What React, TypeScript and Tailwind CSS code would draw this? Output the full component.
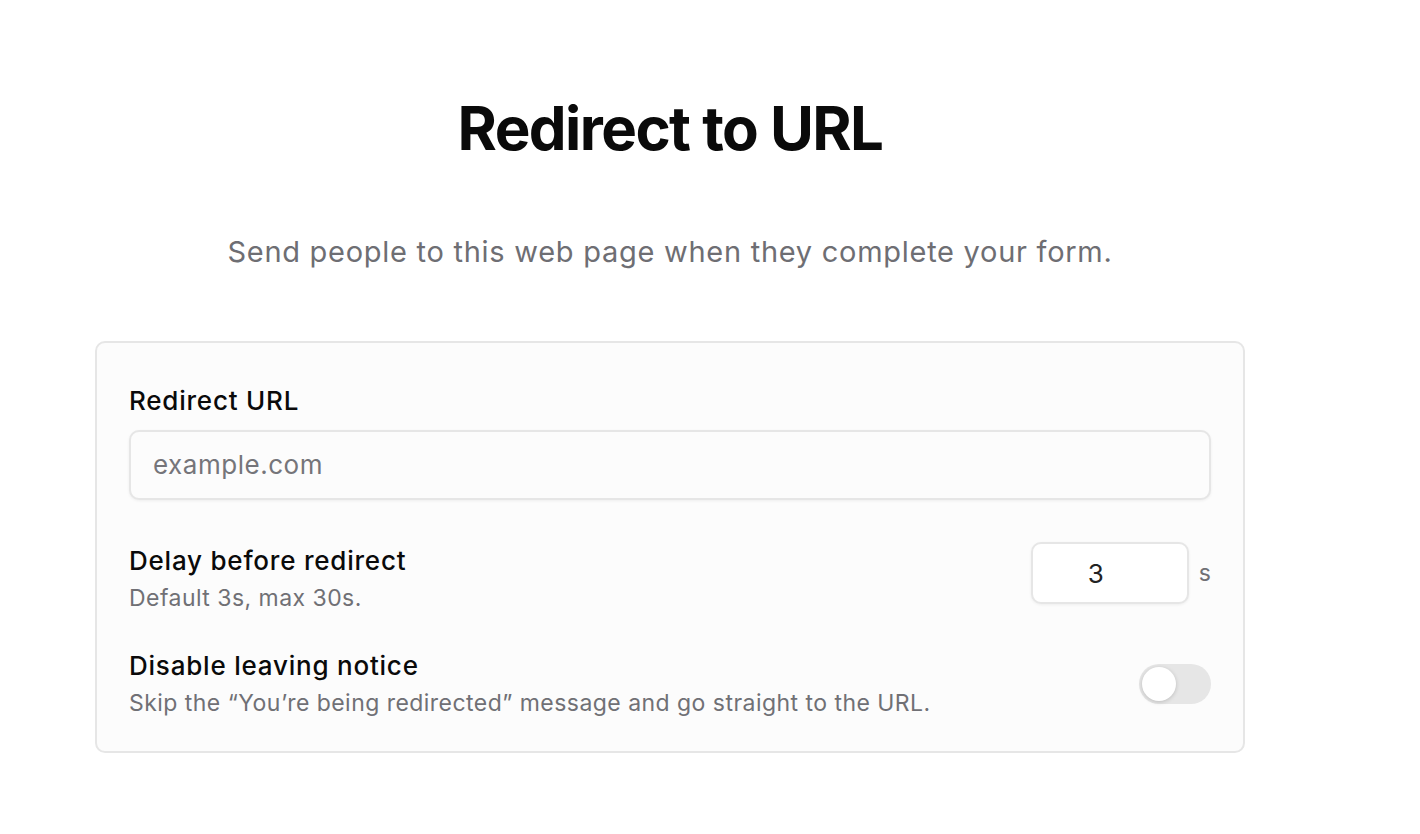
import React from "react";

export default function App() {
  return (
    <div className="min-h-[834px] w-[1420px] bg-white font-['Inter',sans-serif] text-[#0a0a0a]">
      <div className="ml-[95px] w-[1150px] pt-[98px]">
        <h1 className="text-center text-[60px] font-bold leading-none tracking-[-0.026em]">Redirect to URL</h1>
        <p className="mt-[79px] text-center text-[29px] leading-none tracking-[0.025em] text-[#6e6e73]">
          Send people to this web page when they complete your form.
        </p>
        <div className="mt-[75px] rounded-[10px] border-2 border-[#e6e6e6] bg-[#fcfcfc] px-[32px] pb-[36px] pt-[45px]">
          <div className="text-[26px] font-medium leading-none tracking-[0.03em]">Redirect URL</div>
          <div className="mt-[16px] flex h-[70px] items-center rounded-[10px] border-2 border-[#e6e6e6] bg-[#fcfcfc] px-[22px] shadow-[0_1px_3px_rgba(0,0,0,0.06)]">
            <span className="text-[26px] leading-none tracking-[0.02em] text-[#75757a]">example.com</span>
          </div>
          <div className="mt-[48px] flex items-start justify-between">
            <div>
              <div className="text-[26px] font-medium leading-none tracking-[0.03em]">Delay before redirect</div>
              <div className="mt-[13px] text-[23px] leading-none tracking-[0.02em] text-[#707075]">Default 3s, max 30s.</div>
            </div>
            <div className="-mt-[6px] flex items-center gap-[10px]">
              <div className="flex h-[62px] w-[158px] items-center justify-center rounded-[10px] border-2 border-[#e6e6e6] bg-white pr-[28px] text-[26px] text-[#222] shadow-[0_1px_3px_rgba(0,0,0,0.06)]">
                3
              </div>
              <span className="text-[23px] text-[#707075]">s</span>
            </div>
          </div>
          <div className="mt-[43px] flex items-center justify-between">
            <div>
              <div className="text-[26px] font-medium leading-none tracking-[0.03em]">Disable leaving notice</div>
              <div className="mt-[13px] text-[23px] leading-none tracking-[0.02em] text-[#707075]">
                Skip the “You’re being redirected” message and go straight to the URL.
              </div>
            </div>
            <div className="flex h-[40px] w-[72px] items-center rounded-full bg-[#e6e6e6] px-[3px]">
              <div className="h-[34px] w-[34px] rounded-full bg-white shadow-[0_1px_4px_rgba(0,0,0,0.18)]"></div>
            </div>
          </div>
        </div>
      </div>
    </div>
  );
}
